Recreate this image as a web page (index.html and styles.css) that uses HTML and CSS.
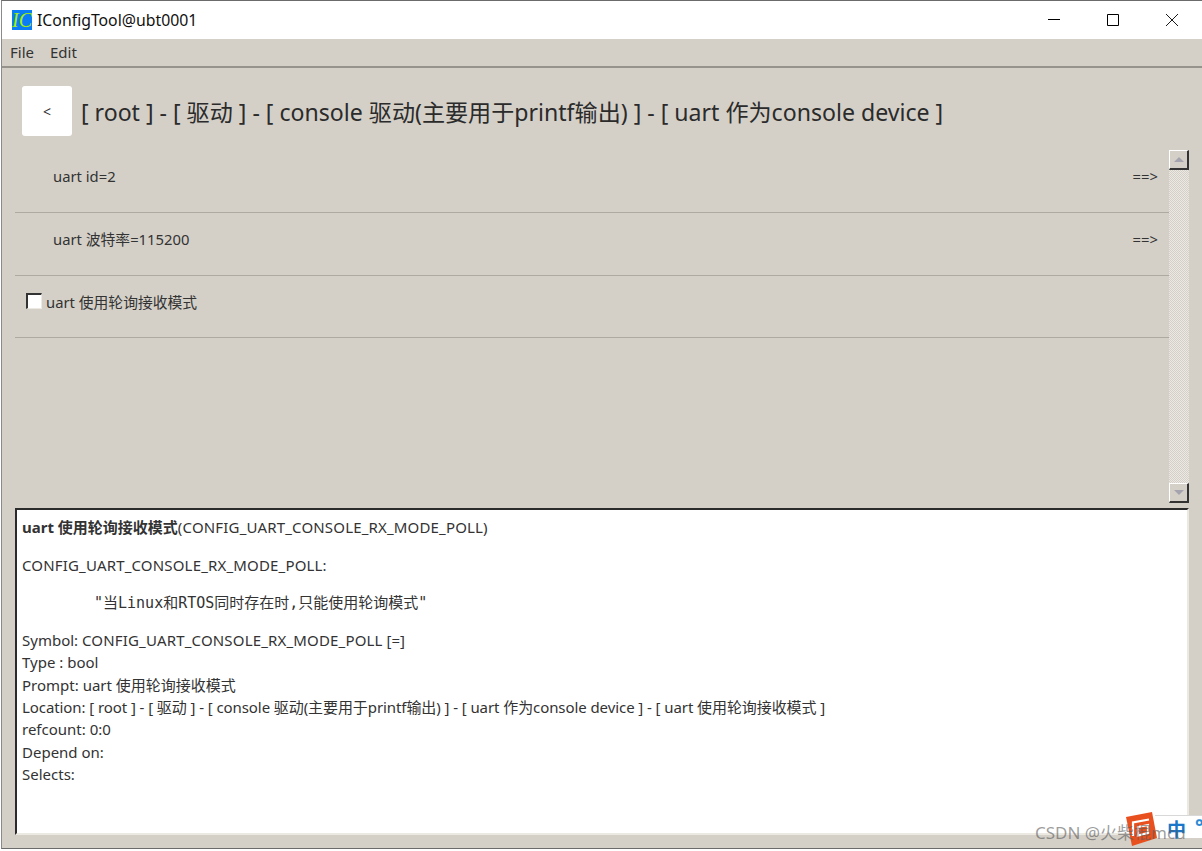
FILE: index.html
```html
<!DOCTYPE html>
<html lang="en">
<head>
<meta charset="UTF-8">
<title>IConfigTool@ubt0001</title>
<link rel="stylesheet" href="styles.css">
</head>
<body>

<div class="window">
    <div class="titlebar">
        <div class="app-icon"><span>IC</span></div>
        <div class="app-title">IConfigTool@ubt0001</div>
        <div class="win-btns">
            <svg class="win-btn" viewBox="0 0 12 12"><path d="M0 5.5H12" stroke="#000" fill="none"/></svg>
            <svg class="win-btn" viewBox="0 0 12 12"><path d="M.5.5H11.5V11.5H.5Z" stroke="#000" fill="none"/></svg>
            <svg class="win-btn" viewBox="0 0 12 12"><path d="M0 0L12 12M12 0L0 12" stroke="#000" stroke-width="0.9" fill="none"/></svg>
        </div>
    </div>

    <div class="menubar">
        <span class="menu-item">File</span>
        <span class="menu-item">Edit</span>
    </div>

    <div class="content">
        <div class="breadcrumb">
            <button class="back-btn">&lt;</button>
            <div class="path">[ root ] - [ 驱动 ] - [ console 驱动(主要用于printf输出) ] - [ uart 作为console device ]</div>
        </div>

        <div class="list-area">
            <div class="list">
                <div class="row row-link">
                    <span>uart id=2</span>
                    <span class="arrow">==&gt;</span>
                </div>
                <div class="row row-link">
                    <span>uart 波特率=115200</span>
                    <span class="arrow">==&gt;</span>
                </div>
                <div class="row row-check">
                    <span class="checkbox"></span>
                    <span>uart 使用轮询接收模式</span>
                </div>
            </div>
            <div class="scrollbar">
                <div class="sb-btn"><span class="tri-up"></span></div>
                <div class="sb-track"></div>
                <div class="sb-btn"><span class="tri-down"></span></div>
            </div>
        </div>

        <div class="info">
            <p class="info-line"><b>uart 使用轮询接收模式</b><span class="caps">(CONFIG_UART_CONSOLE_RX_MODE_POLL)</span></p>
            <p class="info-line gap-top"><span class="caps">CONFIG_UART_CONSOLE_RX_MODE_POLL:</span></p>
            <p class="info-mono">"当Linux和RTOS同时存在时,只能使用轮询模式"</p>
            <p class="info-line">Symbol: <span class="caps">CONFIG_UART_CONSOLE_RX_MODE_POLL</span> [=]</p>
            <p class="info-line">Type : bool</p>
            <p class="info-line">Prompt: uart 使用轮询接收模式</p>
            <p class="info-line tight">Location: [ root ] - [ 驱动 ] - [ console 驱动(主要用于printf输出) ] - [ uart 作为console device ] - [ uart 使用轮询接收模式 ]</p>
            <p class="info-line">refcount: 0:0</p>
            <p class="info-line">Depend on:</p>
            <p class="info-line">Selects:</p>
        </div>
    </div>
</div>

<!-- screenshot overlays: IME bar and watermark -->
<div class="ime">
    <svg class="ime-logo" viewBox="0 0 32 34">
        <path d="M1 5L27 0L32 26L7 34Z" fill="#e8501f"/>
        <path d="M8 24V10.5L24 7.5M13 15L23 13V21L13 23.5Z" stroke="#fff" stroke-width="2.2" fill="none"/>
    </svg>
    <span class="ime-zh">中</span>
    <span class="ime-dot">°</span>
</div>
<div class="watermark">CSDN @火柴棍mcu</div>

</body>
</html>
```

FILE: styles.css
```css
/* Base */
body {
    margin: 0;
    width: 1202px;
    height: 851px;
    overflow: hidden;
    background: #fff;
    font-family: "Noto Sans", "Noto Sans CJK SC", sans-serif;
    color: #2b2b2b;
    position: relative;
}

.window {
    height: 849px;
    margin-left: 1px;
    border-left: 1px solid #8a8a8a;
    border-top: 1px solid #6b6b6b;
    border-bottom: 1px solid #6b6b6b;
    box-sizing: border-box;
    display: flex;
    flex-direction: column;
    background: #d4d0c8;
}

/* Title bar */
.titlebar {
    height: 38px;
    flex: none;
    background: #fff;
    display: flex;
    align-items: center;
    padding-left: 10px;
}
.app-icon {
    width: 20px;
    height: 20px;
    background: #0a7df5;
    color: #a6f000;
    font-family: "Liberation Serif", serif;
    font-style: italic;
    font-size: 20px;
    line-height: 20px;
    text-align: center;
    overflow: hidden;
}
.app-title {
    margin-left: 5px;
    font-size: 15.8px;
    color: #111;
}
.win-btns {
    margin-left: auto;
    display: flex;
    gap: 47px;
    padding-right: 24px;
}
.win-btn {
    width: 12px;
    height: 12px;
    display: block;
}

/* Menu */
.menubar {
    height: 29px;
    flex: none;
    box-sizing: border-box;
    border-bottom: 2px solid #96928c;
    display: flex;
    align-items: center;
    gap: 16px;
    padding: 0 0 2px 8px;
    font-size: 15px;
    color: #333;
}

/* Content */
.content {
    flex: 1;
    min-height: 0;
    display: flex;
    flex-direction: column;
    padding: 0 13px 13px 13px;
}

.breadcrumb {
    display: flex;
    align-items: center;
    height: 50px;
    margin: 18px 0 14px 7px;
    flex: none;
}
.back-btn {
    width: 50px;
    height: 50px;
    border: none;
    border-radius: 3px;
    background: #fff;
    color: #333;
    font-family: inherit;
    font-size: 14px;
    padding: 0;
}
.path {
    margin-left: 9px;
    font-size: 23.1px;
    color: #2b2b2b;
    white-space: nowrap;
}

/* Option list */
.list-area {
    height: 358px;
    flex: none;
    display: flex;
}
.list {
    flex: 1;
}
.row {
    height: 63px;
    box-sizing: border-box;
    border-bottom: 1px solid #aeaaa3;
    display: flex;
    align-items: center;
    font-size: 14.8px;
    color: #333;
}
.row-link {
    justify-content: space-between;
    padding: 0 11px 11px 38px;
}
.row-check {
    height: 62px;
    padding: 0 0 11px 11px;
}
.arrow {
    font-variant-ligatures: none;
}
.checkbox {
    width: 16px;
    height: 16px;
    box-sizing: border-box;
    background: #fff;
    border-top: 2px solid #333;
    border-left: 2px solid #333;
    border-right: 1px solid #ece9e3;
    border-bottom: 1px solid #ece9e3;
    margin-right: 4px;
}

/* Scrollbar */
.scrollbar {
    width: 20px;
    flex: none;
    display: flex;
    flex-direction: column;
    height: 353px;
}
.sb-btn {
    height: 20px;
    flex: none;
    box-sizing: border-box;
    background: #d4d0c8;
    border: 1px solid #fff;
    border-right: 2px solid #333;
    border-bottom: 2px solid #333;
    display: flex;
    align-items: center;
    justify-content: center;
}
.tri-up {
    width: 0;
    height: 0;
    border: 5px solid transparent;
    border-top: 0;
    border-bottom: 5px solid #a5a3ad;
}
.tri-down {
    width: 0;
    height: 0;
    border: 5px solid transparent;
    border-bottom: 0;
    border-top: 5px solid #a5a3ad;
}
.sb-track {
    flex: 1;
    background-color: #ece9e4;
    background-image: conic-gradient(#d4d0c8 25%, transparent 0 50%, #d4d0c8 0 75%, transparent 0);
    background-size: 2px 2px;
}

/* Info pane */
.info {
    flex: 1;
    min-height: 0;
    box-sizing: border-box;
    background: #fff;
    border-top: 2px solid #2b2b2b;
    border-left: 2px solid #2b2b2b;
    border-right: 2px solid #ece9e3;
    border-bottom: 2px solid #ece9e3;
    padding: 6px 5px;
    font-size: 15px;
    color: #333;
    overflow: hidden;
}
.info-line {
    margin: 0;
    line-height: 22.4px;
    white-space: nowrap;
}
.caps {
    letter-spacing: 0.17px;
}
.tight {
    letter-spacing: -0.08px;
}
.gap-top {
    margin-top: 15.5px;
}
.info-mono {
    margin: 15.5px 0 14.5px;
    padding-left: 72px;
    line-height: 22.4px;
    font-family: "DejaVu Sans Mono", "Noto Sans CJK SC", monospace;
    font-size: 15px;
    white-space: nowrap;
}

/* Overlays */
.ime {
    position: absolute;
    right: 0;
    top: 815px;
    width: 47px;
    height: 22px;
    background: #fff;
    border-top: 1px solid #d8d8d8;
}
.ime-logo {
    position: absolute;
    left: -30px;
    top: -4px;
    width: 32px;
    height: 34px;
}
.ime-zh {
    position: absolute;
    left: 12px;
    top: 1px;
    font-size: 19px;
    line-height: 26px;
    font-weight: bold;
    color: #1976c8;
}
.ime-dot {
    position: absolute;
    left: 40px;
    top: -3px;
    font-size: 20px;
    font-weight: bold;
    color: #2a8ad4;
}
.watermark {
    position: absolute;
    left: 1035px;
    top: 821px;
    font-size: 17px;
    line-height: 24px;
    color: rgba(90, 90, 90, 0.6);
    white-space: nowrap;
}
```
